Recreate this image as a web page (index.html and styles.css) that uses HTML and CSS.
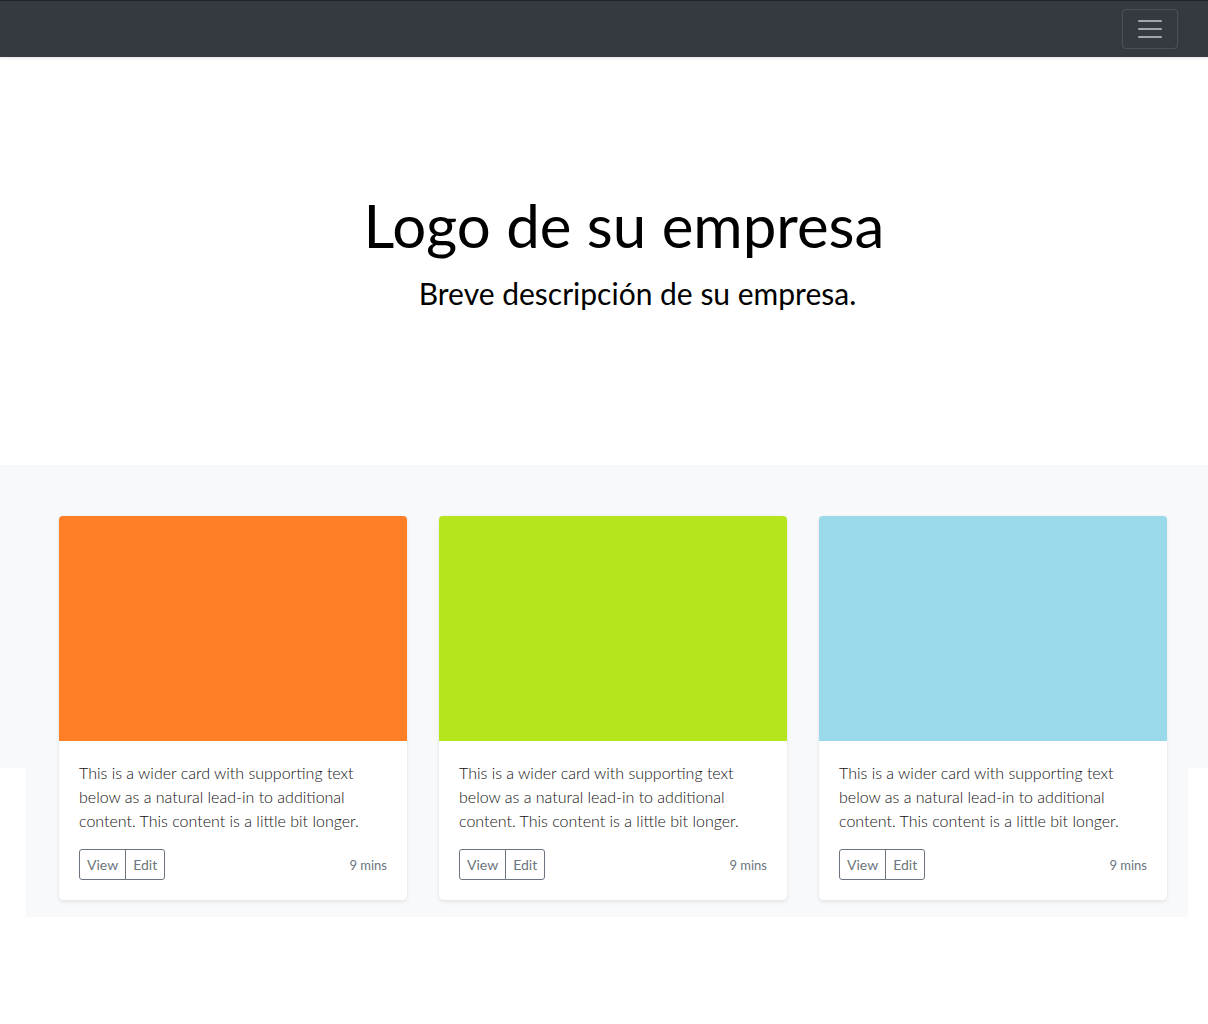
FILE: index.html
```html
<!DOCTYPE html>
<html lang="es">
<head>
<meta charset="utf-8">
<title>Album</title>
<link rel="stylesheet" href="styles.css">
</head>
<body>
<header class="navbar">
  <button class="toggler" aria-label="Menu">
    <svg width="30" height="30" viewBox="0 0 30 30"><path d="M4 7h22M4 15h22M4 23h22" stroke="rgba(255,255,255,0.55)" stroke-width="2" stroke-linecap="round" fill="none"/></svg>
  </button>
</header>
<main>
  <section class="hero">
    <h1 class="hero-title">Logo de su empresa</h1>
    <p class="hero-lead">Breve descripción de su empresa.</p>
  </section>
  <section class="album">
    <div class="container">
      <div class="cards">
        <div class="card">
          <div class="thumb thumb-orange"></div>
          <div class="card-body">
            <p class="card-text">This is a wider card with supporting text below as a natural lead-in to additional content. This content is a little bit longer.</p>
            <div class="card-foot">
              <div class="btn-group"><button class="btn">View</button><button class="btn">Edit</button></div>
              <small class="muted">9 mins</small>
            </div>
          </div>
        </div>
        <div class="card">
          <div class="thumb thumb-green"></div>
          <div class="card-body">
            <p class="card-text">This is a wider card with supporting text below as a natural lead-in to additional content. This content is a little bit longer.</p>
            <div class="card-foot">
              <div class="btn-group"><button class="btn">View</button><button class="btn">Edit</button></div>
              <small class="muted">9 mins</small>
            </div>
          </div>
        </div>
        <div class="card">
          <div class="thumb thumb-blue"></div>
          <div class="card-body">
            <p class="card-text">This is a wider card with supporting text below as a natural lead-in to additional content. This content is a little bit longer.</p>
            <div class="card-foot">
              <div class="btn-group"><button class="btn">View</button><button class="btn">Edit</button></div>
              <small class="muted">9 mins</small>
            </div>
          </div>
        </div>
      </div>
    </div>
  </section>
</main>
</body>
</html>
```
FILE: styles.css
```css
* { box-sizing: border-box; }
html, body { margin: 0; padding: 0; }
body {
  font-family: Lato, "Open Sans", sans-serif;
  color: #212529;
  background: #fff;
  min-height: 1024px;
}
.navbar {
  height: 57px;
  background: #343a40;
  border-top: 1px solid #1f2326;
  display: flex;
  justify-content: flex-end;
  align-items: flex-start;
  padding: 8px 30px 0 0;
  box-shadow: 0 1px 3px rgba(0,0,0,0.12);
  position: relative;
  z-index: 1;
}
.toggler {
  width: 56px;
  height: 40px;
  background: transparent;
  border: 1px solid rgba(255,255,255,0.12);
  border-radius: 4px;
  display: flex;
  align-items: center;
  justify-content: center;
  padding: 0;
}
.hero {
  height: 408px;
  text-align: center;
  padding-top: 132px;
}
.hero-title {
  margin: 0;
  font-weight: 400;
  font-size: 60px;
  line-height: 72px;
  color: #000;
  padding-left: 40px;
}
.hero-lead {
  margin: 0;
  padding-top: 14px;
  font-size: 30px;
  line-height: 36px;
  color: #000;
  padding-left: 67px;
}
.album {
  background: linear-gradient(#f8f9fa, #f8f9fa) top left / 100% 303px no-repeat;
  padding-bottom: 1px;
}
.container {
  width: 1162px;
  margin-left: 26px;
  background: #f8f9fa;
  padding: 51px 21px 17px 33px;
}
.cards {
  display: grid;
  grid-template-columns: repeat(3, 348px);
  column-gap: 32px;
}
.card {
  background: #fff;
  border-radius: 4px;
  box-shadow: 0 .125rem .25rem rgba(0,0,0,.075), 0 0 1px rgba(0,0,0,0.15);
  overflow: hidden;
}
.thumb { height: 225px; }
.thumb-orange { background: #ff7f27; }
.thumb-green { background: #b5e61d; }
.thumb-blue { background: #99d9ea; }
.card-body { padding: 20px; }
.card-text {
  margin: 0 0 16px;
  font-size: 16px;
  line-height: 24px;
  font-weight: 300;
  color: #111;
}
.card-foot {
  display: flex;
  justify-content: space-between;
  align-items: center;
}
.btn-group { display: flex; }
.btn {
  font-family: Lato, "Open Sans", sans-serif;
  font-weight: 400;
  font-size: 14px;
  line-height: 21px;
  height: 31px;
  padding: 4px 7px;
  background: #fff;
  color: #6c757d;
  border: 1px solid #6c757d;
  margin: 0;
}
.btn:first-child { border-radius: 3px 0 0 3px; }
.btn:last-child { border-radius: 0 3px 3px 0; margin-left: -1px; }
.muted {
  font-size: 13px;
  color: #6c757d;
  font-weight: 400;
}
```
